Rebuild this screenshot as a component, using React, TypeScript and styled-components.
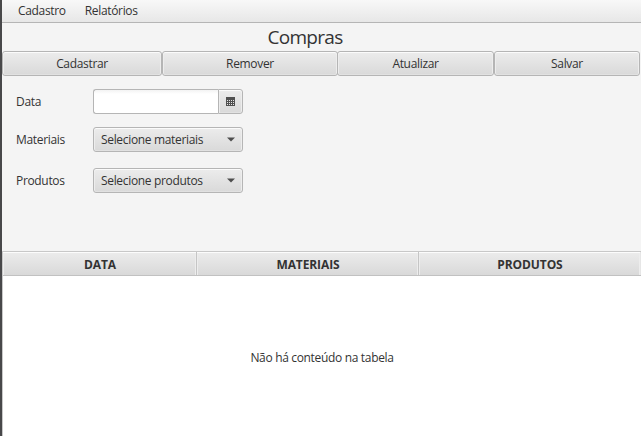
import React from "react";
import styled, { createGlobalStyle } from "styled-components";

const Global = createGlobalStyle`
  *, *::before, *::after { box-sizing: border-box; }
  body { margin: 0; overflow: hidden; background: #f4f4f4; }
`;

const Window = styled.div`
  display: flex;
  flex-direction: column;
  width: 641px;
  height: 436px;
  border-left: 2px solid #48484a;
  background: #f4f4f4;
  color: #333;
  font: 12px/16px "Open Sans", "Noto Sans", sans-serif;
  white-space: nowrap;
`;

const Label = styled.span<{ $spacing?: number }>`
  letter-spacing: ${(p) => p.$spacing ?? -0.33}px;
`;

const MenuBar = styled.nav`
  display: flex;
  gap: 19px;
  flex: none;
  height: 23px;
  padding: 3px 16px 0;
  border-bottom: 1px solid #b5b5b5;
  background: linear-gradient(#f8f8f8, #e7e7e7);
`;

const Title = styled.h1`
  flex: none;
  height: 28px;
  margin: 0;
  padding-right: 33px;
  text-align: center;
  font-size: 19px;
  font-weight: 400;
  line-height: 29px;
`;

const Toolbar = styled.div`
  display: grid;
  grid-template-columns: 160px 175px 157px 146px;
  flex: none;
  height: 25px;
`;

const control = `
  border: 1px solid #b5b5b5;
  border-radius: 3px;
  background: linear-gradient(#ececec, #d9d9d9);
  box-shadow: inset 0 1px #fbfbfb, inset 1px 0 #ededed, inset -1px 0 #ededed, inset 0 -1px #e1e1e1;
  color: inherit;
  font: inherit;
`;

const Button = styled.button<{ $joined?: boolean }>`
  ${control}
  padding: 0;
  margin-right: ${(p) => (p.$joined ? -1 : 0)}px;
`;

const Form = styled.form`
  display: grid;
  grid-template-columns: 77px 150px;
  grid-template-rows: 25px 25px 25px;
  row-gap: 13px;
  flex: none;
  height: 175px;
  padding: 13px 14px 0;
  align-items: center;
`;

const Row = styled.div<{ $offset?: number }>`
  display: grid;
  grid-template-columns: subgrid;
  grid-column: 1 / -1;
  align-items: center;
  height: 25px;
  margin-top: ${(p) => p.$offset ?? 0}px;
`;

const DateField = styled.div`
  display: flex;
  height: 25px;
`;

const DateInput = styled.input`
  width: 125px;
  border: 1px solid #b5b5b5;
  border-right: 0;
  border-radius: 3px 0 0 3px;
  background: linear-gradient(#f3f3f3, #fff 4px);
  outline: none;
`;

const DateButton = styled.button`
  ${control}
  display: grid;
  place-items: center;
  width: 25px;
  padding: 0 1px 0 0;
  border-radius: 0 3px 3px 0;
`;

const Combo = styled.button`
  ${control}
  display: flex;
  align-items: center;
  justify-content: space-between;
  height: 25px;
  padding: 0 7px;
`;

const Table = styled.section`
  display: flex;
  flex-direction: column;
  flex: 1;
  border-top: 1px solid #c8c8c8;
  border-left: 1px solid #c8c8c8;
  background: #fff;
`;

const TableHead = styled.div`
  display: grid;
  grid-template-columns: 194px 222px 222px;
  height: 24px;
  border-bottom: 1px solid #c1c1c1;
  font-weight: 700;
`;

const HeadCell = styled.div`
  padding: 5px 0 0 1px;
  border-right: 1px solid #c5c5c5;
  background: linear-gradient(#ececec, #d9d9d9);
  box-shadow: inset 0 1px #fcfcfc, inset 1px 0 #ededed, inset -1px 0 #ededed;
  text-align: center;
  &:last-child { border-right-color: #e6e6e6; }
`;

const Placeholder = styled.div`
  display: grid;
  flex: 1;
  place-items: center;
  padding: 3px 0 0;
`;

const CalendarIcon = () => (
  <svg width="9" height="9" viewBox="0 0 9 9" shapeRendering="crispEdges">
    <path d="M0 0h9v9H0z" fill="#505050" />
    {[3, 5, 7].map((y) =>
      [1, 3, 5, 7].map((x) => (
        <rect key={`${x}-${y}`} x={x} y={y} width="1" height="1" fill="#e4e4e4" />
      )),
    )}
  </svg>
);

const Arrow = () => (
  <svg width="8" height="5" viewBox="0 0 8 5">
    <path d="M0 .5h8L4 4.5z" fill="#4d4d4d" />
  </svg>
);

export default function App() {
  return (
    <>
      <Global />
      <Window>
        <MenuBar>
          <Label>Cadastro</Label>
          <Label>Relatórios</Label>
        </MenuBar>
        <Title><Label $spacing={-0.7}>Compras</Label></Title>
        <Toolbar>
          {["Cadastrar", "Remover", "Atualizar", "Salvar"].map((name) => (
            <Button key={name} type="button" $joined={name === "Remover"}>
              <Label>{name}</Label>
            </Button>
          ))}
        </Toolbar>
        <Form>
          <Row>
            <Label>Data</Label>
            <DateField>
              <DateInput />
              <DateButton type="button"><CalendarIcon /></DateButton>
            </DateField>
          </Row>
          <Row>
            <Label>Materiais</Label>
            <Combo type="button"><Label>Selecione materiais</Label><Arrow /></Combo>
          </Row>
          <Row $offset={6}>
            <Label>Produtos</Label>
            <Combo type="button"><Label>Selecione produtos</Label><Arrow /></Combo>
          </Row>
        </Form>
        <Table>
          <TableHead>
            {["DATA", "MATERIAIS", "PRODUTOS"].map((name) => (
              <HeadCell key={name}><Label $spacing={-0.1}>{name}</Label></HeadCell>
            ))}
          </TableHead>
          <Placeholder><Label>Não há conteúdo na tabela</Label></Placeholder>
        </Table>
      </Window>
    </>
  );
}
